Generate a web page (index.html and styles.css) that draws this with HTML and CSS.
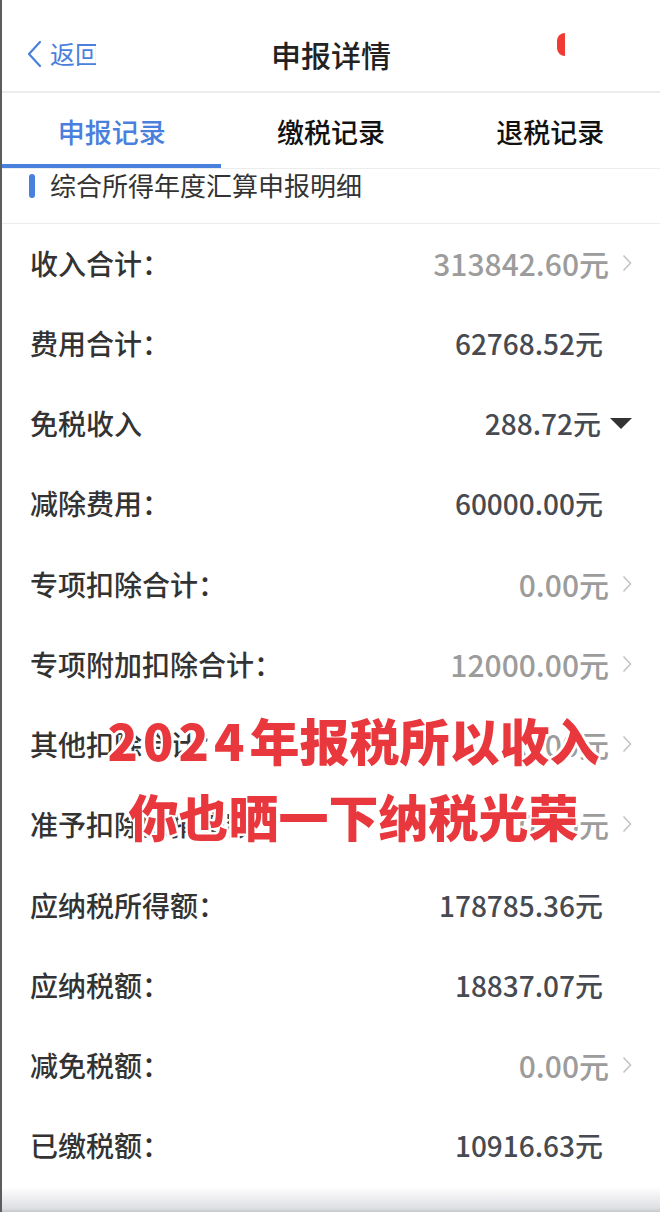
FILE: index.html
```html
<!DOCTYPE html>
<html lang="zh-CN">
<head>
    <meta charset="UTF-8">
    <meta name="viewport" content="width=device-width, initial-scale=1.0">
    <title>申报详情</title>
    <link rel="stylesheet" href="styles.css">
</head>
<body>
    <div class="screen">
        <header class="nav">
            <a class="nav-back">
                <svg class="nav-back-icon" width="16" height="28" viewBox="0 0 16 28">
                    <polyline points="14,2 3,14 14,26" fill="none" stroke="#4a80dd" stroke-width="2.2" stroke-linecap="round" stroke-linejoin="round"/>
                </svg>
                <span class="nav-back-text">返回</span>
            </a>
            <h1 class="nav-title">申报详情</h1>
            <div class="nav-right"><span class="nav-dot"></span></div>
        </header>

        <nav class="tabs">
            <div class="tab tab-active">申报记录</div>
            <div class="tab">缴税记录</div>
            <div class="tab">退税记录</div>
        </nav>

        <div class="section-title">
            <span class="section-bar"></span>
            <span>综合所得年度汇算申报明细</span>
        </div>

        <ul class="rows">
            <li class="row">
                <span class="row-label">收入合计：</span>
                <span class="row-value link">313842.60元</span>
                <svg class="chevron" width="10" height="18" viewBox="0 0 10 18"><polyline points="1.5,1.5 8.5,9 1.5,16.5" fill="none" stroke="#c4c4c4" stroke-width="1.6"/></svg>
            </li>
            <li class="row">
                <span class="row-label">费用合计：</span>
                <span class="row-value">62768.52元</span>
            </li>
            <li class="row">
                <span class="row-label">免税收入</span>
                <span class="row-value with-caret">288.72元</span>
                <svg class="caret" width="22" height="11" viewBox="0 0 22 11"><polygon points="0,0 22,0 11,11" fill="#333"/></svg>
            </li>
            <li class="row">
                <span class="row-label">减除费用：</span>
                <span class="row-value">60000.00元</span>
            </li>
            <li class="row">
                <span class="row-label">专项扣除合计：</span>
                <span class="row-value link">0.00元</span>
                <svg class="chevron" width="10" height="18" viewBox="0 0 10 18"><polyline points="1.5,1.5 8.5,9 1.5,16.5" fill="none" stroke="#c4c4c4" stroke-width="1.6"/></svg>
            </li>
            <li class="row">
                <span class="row-label">专项附加扣除合计：</span>
                <span class="row-value link">12000.00元</span>
                <svg class="chevron" width="10" height="18" viewBox="0 0 10 18"><polyline points="1.5,1.5 8.5,9 1.5,16.5" fill="none" stroke="#c4c4c4" stroke-width="1.6"/></svg>
            </li>
            <li class="row">
                <span class="row-label">其他扣除合计：</span>
                <span class="row-value link">0.00元</span>
                <svg class="chevron" width="10" height="18" viewBox="0 0 10 18"><polyline points="1.5,1.5 8.5,9 1.5,16.5" fill="none" stroke="#c4c4c4" stroke-width="1.6"/></svg>
            </li>
            <li class="row">
                <span class="row-label">准予扣除的捐赠额：</span>
                <span class="row-value link">0.00元</span>
                <svg class="chevron" width="10" height="18" viewBox="0 0 10 18"><polyline points="1.5,1.5 8.5,9 1.5,16.5" fill="none" stroke="#c4c4c4" stroke-width="1.6"/></svg>
            </li>
            <li class="row">
                <span class="row-label">应纳税所得额：</span>
                <span class="row-value">178785.36元</span>
            </li>
            <li class="row">
                <span class="row-label">应纳税额：</span>
                <span class="row-value">18837.07元</span>
            </li>
            <li class="row">
                <span class="row-label">减免税额：</span>
                <span class="row-value link">0.00元</span>
                <svg class="chevron" width="10" height="18" viewBox="0 0 10 18"><polyline points="1.5,1.5 8.5,9 1.5,16.5" fill="none" stroke="#c4c4c4" stroke-width="1.6"/></svg>
            </li>
            <li class="row">
                <span class="row-label">已缴税额：</span>
                <span class="row-value">10916.63元</span>
            </li>
        </ul>

        <div class="bottom-shadow"></div>

        <!-- red caption laid over the screenshot -->
        <div class="stamp">
            <p class="stamp-line"><span class="stamp-num">2024</span>年报税所以收入</p>
            <p class="stamp-line">你也晒一下纳税光荣</p>
        </div>
    </div>
</body>
</html>
```

FILE: styles.css
```css
html, body {
    margin: 0;
    padding: 0;
    background: #fff;
}

body {
    font-family: "Noto Sans CJK SC", "Noto Sans", sans-serif;
    color: #333;
}

.screen {
    position: relative;
    width: 658px;
    height: 1212px;
    border-left: 2px solid #5c5c5c;
    border-right: 1px solid #dedede;
    overflow: hidden;
    background: #fff;
}

/* Top navigation bar */
.nav {
    display: grid;
    grid-template-columns: 1fr auto 1fr;
    align-items: center;
    height: 75px;
    padding-top: 16px;
    border-bottom: 2px solid #ececec;
}

.nav-back {
    display: flex;
    align-items: center;
    padding-left: 24px;
    color: #4a80dd;
}

.nav-back-icon {
    display: block;
}

.nav-back-text {
    display: block;
    width: 46px;
    margin-left: 8px;
    overflow: hidden;
    white-space: nowrap;
    font-size: 25px;
    line-height: 1;
}

.nav-title {
    margin: 0;
    font-size: 30px;
    font-weight: 500;
    line-height: 1;
    color: #222;
}

.nav-right {
    justify-self: end;
    padding-right: 95px;
    padding-bottom: 19px;
}

.nav-dot {
    display: block;
    width: 8px;
    height: 23px;
    background: #ef3b33;
    border-radius: 12px 0 0 12px;
}

/* Tabs */
.tabs {
    display: grid;
    grid-template-columns: repeat(3, 1fr);
    height: 75px;
    border-bottom: 1px solid #ececec;
}

.tab {
    position: relative;
    display: flex;
    align-items: center;
    justify-content: center;
    padding-top: 1px;
    font-size: 27px;
    font-weight: 500;
    line-height: 1;
    color: #111;
}

.tab-active {
    color: #4a80dd;
}

.tab-active::after {
    content: '';
    position: absolute;
    left: -2px;
    right: 0;
    bottom: 0;
    height: 4px;
    background: #4a80dd;
}

/* Section header */
.section-title {
    display: flex;
    align-items: flex-start;
    height: 51px;
    padding: 3px 0 0 27px;
    border-bottom: 1px solid #ededed;
    font-size: 26px;
    line-height: 1;
    color: #333;
}

.section-bar {
    width: 6px;
    height: 24px;
    margin: 2px 15px 0 0;
    background: #4a80dd;
    border-radius: 3px;
}

/* Detail rows */
.rows {
    display: grid;
    grid-auto-rows: 80.25px;
    margin: 0;
    padding: 0;
    list-style: none;
}

.row {
    display: flex;
    align-items: center;
    padding: 0 28px 3px;
    font-size: 28px;
    line-height: 1;
}

.row-label {
    flex: 1;
    font-weight: 500;
    color: #333;
}

.row-value {
    margin-right: 29px;
    font-weight: 500;
    color: #474a50;
}

.row-value.link {
    margin-right: 0;
    font-size: 30px;
    color: #9c9c9c;
}

.row-value.with-caret {
    margin-right: 0;
}

.chevron {
    display: block;
    margin-left: 13px;
}

.caret {
    display: block;
    margin-left: 9px;
}

.bottom-shadow {
    height: 25px;
    background: linear-gradient(#fff, #dedfe2 85%, #c6c7ca);
}

/* Overlay caption */
.stamp {
    position: absolute;
    top: 701px;
    left: 0;
    right: 0;
    padding-left: 45px;
    text-align: center;
}

.stamp-line {
    margin: 0;
    font-size: 50px;
    font-weight: 900;
    line-height: 76px;
    color: #e8383d;
    text-shadow: 2px 0 0 #fff, -2px 0 0 #fff, 0 2px 0 #fff, 0 -2px 0 #fff,
        2px 2px 0 #fff, -2px -2px 0 #fff, 2px -2px 0 #fff, -2px 2px 0 #fff,
        0 0 4px #fff;
}

.stamp-num {
    letter-spacing: 5px;
}
```
